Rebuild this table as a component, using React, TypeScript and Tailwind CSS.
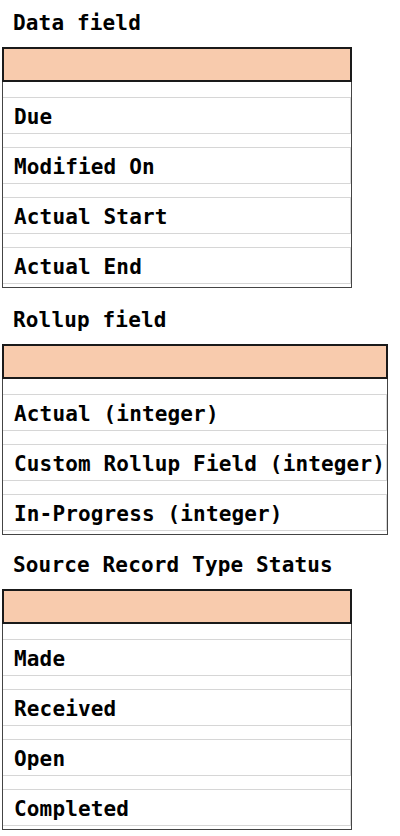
const mono = "font-['DejaVu_Sans_Mono',monospace] font-bold text-[21px] tracking-[0.15px] leading-7 text-black";

type Section = {
  title: string;
  width: string;
  items: string[];
  spacing: string;
};

const sections: Section[] = [
  {
    title: "Data field",
    width: "w-[350px]",
    items: ["Due", "Modified On", "Actual Start", "Actual End"],
    spacing: "mt-[9px]",
  },
  {
    title: "Rollup field",
    width: "w-[386px]",
    items: [
      "Actual (integer)",
      "Custom Rollup Field (integer)",
      "In-Progress (integer)",
    ],
    spacing: "mt-[18px]",
  },
  {
    title: "Source Record Type Status",
    width: "w-[350px]",
    items: ["Made", "Received", "Open", "Completed"],
    spacing: "mt-[16px]",
  },
];

const FieldBox = ({ section }: { section: Section }) => (
  <div className={section.spacing}>
    <div className={`${mono} h-7 pl-[13px] whitespace-nowrap`}>{section.title}</div>
    <div className={`mt-[10px] ml-[2px] flex flex-col ${section.width}`}>
      {/* empty drop zone header */}
      <div className="h-[35px] border-2 border-[#1a1a1a] bg-[#f8cbad]" />
      <div className="flex flex-col gap-[13px] border-x border-b border-[#444] pt-[15px] pb-[3px]">
        {section.items.map((item) => (
          <div
            key={item}
            className="flex h-[37px] items-center border-y border-r border-[#d6d6d6] pl-[11px] pt-[3px]"
          >
            <span className={`${mono} whitespace-nowrap`}>{item}</span>
          </div>
        ))}
      </div>
    </div>
  </div>
);

export default function App() {
  return (
    <div className="h-[836px] w-[400px] overflow-hidden bg-white">
      {sections.map((s) => (
        <FieldBox key={s.title} section={s} />
      ))}
    </div>
  );
}
